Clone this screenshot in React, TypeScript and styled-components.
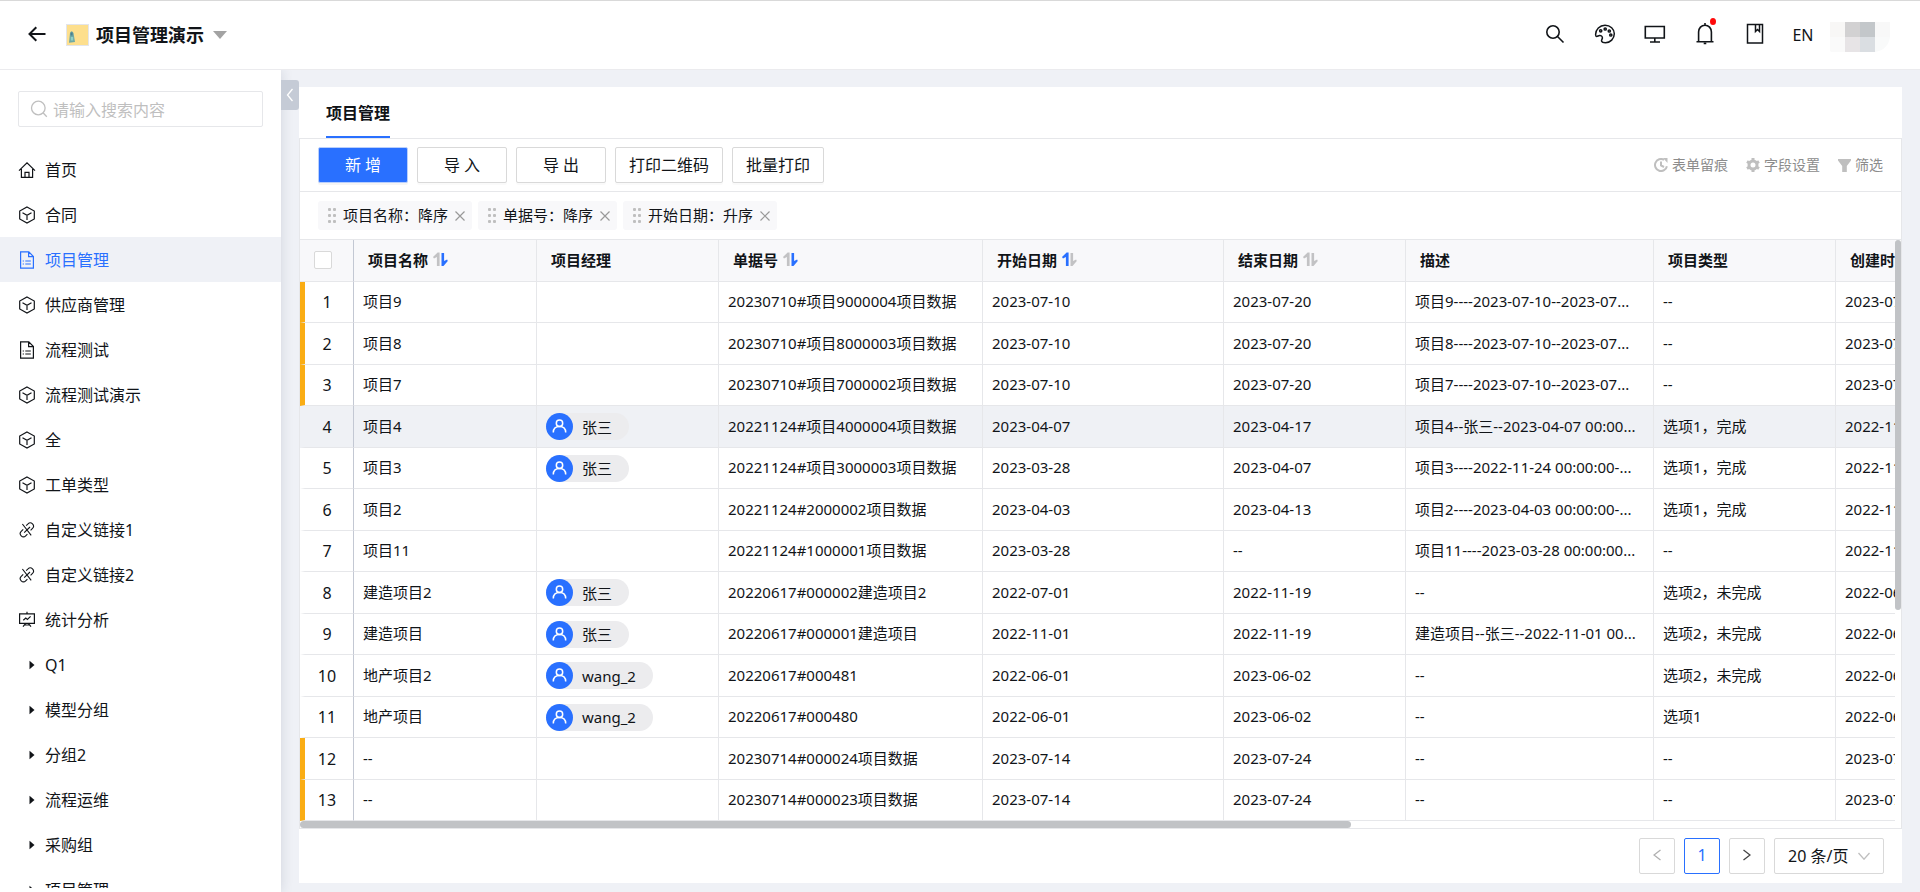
import React from 'react';
import styled, { createGlobalStyle, css } from 'styled-components';

const c = {
  primary: '#2970ff',
  text: '#111418',
  line: '#e6e7ea',
  border: '#d9d9d9',
  canvas: '#eff1f6',
  head: '#f8f8fa',
  muted: '#8c8c8c',
  faint: '#bfbfbf',
  flag: '#faad14',
};

const Global = createGlobalStyle`
  *, *::before, *::after { box-sizing: border-box; }
  body {
    margin: 0;
    color: ${c.text};
    background: ${c.canvas};
    font: 16px/24px "Noto Sans", "Noto Sans CJK SC", sans-serif;
  }
  button, input, select { font: inherit; color: inherit; margin: 0; }
  svg { display: block; flex: none; }
`;

/* ---------- frame ---------- */

const Shell = styled.div`
  display: flex;
  flex-direction: column;
  height: 100vh;
  overflow: hidden;
`;

const TopBar = styled.header`
  display: flex;
  align-items: center;
  justify-content: space-between;
  flex: none;
  height: 70px;
  padding: 0 30px 0 28px;
  background: #fff;
  border-top: 1px solid ${c.border};
  border-bottom: 1px solid #ebebee;
`;

const Brand = styled.div`
  display: flex;
  align-items: center;
`;

const GhostButton = styled.button`
  display: flex;
  align-items: center;
  justify-content: center;
  padding: 0;
  border: 0;
  background: none;
  cursor: pointer;
`;

const BackButton = styled(GhostButton)`
  margin-right: 20px;
  padding-bottom: 2px;
`;

const AppTitle = styled.h1`
  margin: 0 9px 0 7px;
  font-size: 18px;
  line-height: 26px;
  font-weight: 700;
`;

const Actions = styled.div`
  display: flex;
  align-items: center;
  gap: 26px;
`;

const ActionButton = styled(GhostButton)`
  position: relative;
  width: 24px;
  height: 30px;
  padding-bottom: 2px;
`;

const Dot = styled.span`
  position: absolute;
  top: -2px;
  right: 1px;
  width: 6px;
  height: 7px;
  border-radius: 50%;
  background: #ff0a0a;
`;

const LangButton = styled(GhostButton)`
  width: 22px;
  margin: 0 -10px 0 -1px;
`;

const Account = styled.div`
  padding-top: 4px;
`;

const Body = styled.div`
  display: flex;
  flex: 1;
  min-height: 0;
`;

/* ---------- sidebar ---------- */

const Sidebar = styled.aside`
  display: flex;
  flex-direction: column;
  flex: none;
  width: 281px;
  padding: 21px 0 4px;
  background: #fff;
  box-shadow: 0 0 12px rgba(30, 40, 70, 0.14);
  clip-path: inset(0 -18px 0 0);
`;

const SearchBox = styled.label`
  display: flex;
  align-items: center;
  gap: 5px;
  height: 36px;
  flex: none;
  margin: 0 18px 20px;
  padding: 0 11px;
  border: 1px solid ${c.line};
  border-radius: 2px;
`;

const SearchInput = styled.input`
  flex: 1;
  min-width: 0;
  padding: 2px 0 0;
  border: 0;
  outline: 0;
  background: none;
  &::placeholder { color: ${c.faint}; opacity: 1; }
`;

const Nav = styled.nav`
  flex: 1;
  min-height: 0;
  overflow: hidden;
`;

const NavItem = styled.a<{ $active?: boolean }>`
  display: flex;
  align-items: center;
  gap: 9px;
  height: 45px;
  padding-left: 18px;
  text-decoration: none;
  color: ${(p) => (p.$active ? c.primary : c.text)};
  background: ${(p) => (p.$active ? c.canvas : 'transparent')};
`;

const Collapse = styled.button`
  display: flex;
  align-items: center;
  justify-content: center;
  flex: none;
  width: 18px;
  height: 30px;
  margin-top: 10px;
  padding: 0;
  border: 0;
  border-radius: 0 3px 3px 0;
  background: #c5cbd6;
  z-index: 1;
`;

/* ---------- content panel ---------- */

const Panel = styled.main`
  display: flex;
  flex-direction: column;
  flex: 1;
  min-width: 0;
  margin: 17px 18px 9px 0;
  background: #fff;
`;

const Tabs = styled.div`
  display: flex;
  flex: none;
  height: 51px;
  padding: 0 27px;
`;

const Tab = styled.button`
  padding: 2px 0 0;
  border: 0;
  border-bottom: 2px solid ${c.primary};
  background: none;
  font-weight: 600;
`;

const Board = styled.section`
  display: flex;
  flex-direction: column;
  flex: 1;
  min-height: 0;
  border: 1px solid ${c.line};
`;

const Toolbar = styled.div`
  display: flex;
  align-items: center;
  justify-content: space-between;
  flex: none;
  height: 53px;
  padding: 0 18px;
  border-bottom: 1px solid ${c.line};
`;

const ButtonRow = styled.div`
  display: flex;
  gap: 9px;
`;

const Button = styled.button<{ $primary?: boolean }>`
  min-width: 90px;
  height: 36px;
  padding: 0 13px;
  border: 1px solid ${c.border};
  border-radius: 2px;
  background: #fff;
  box-shadow: 0 2px 0 rgba(0, 0, 0, 0.02);
  cursor: pointer;
  ${(p) => p.$primary && css`
    color: #fff;
    background: ${c.primary};
    border-color: #b9cffc;
    box-shadow: 0 2px 0 rgba(0, 0, 0, 0.04);
  `}
`;

const ToolRow = styled.div`
  display: flex;
  gap: 18px;
`;

const Tool = styled(GhostButton)`
  gap: 4px;
  color: ${c.muted};
  font-size: 14px;
  line-height: 20px;
`;

const SortBar = styled.div`
  display: flex;
  align-items: center;
  gap: 6px;
  flex: none;
  height: 48px;
  padding: 0 18px;
  border-bottom: 1px solid ${c.line};
`;

const SortChip = styled.span`
  display: flex;
  align-items: center;
  height: 29px;
  padding: 0 7px 0 10px;
  border-radius: 3px;
  background: #f8f8fa;
  font-size: 15px;
`;

const ChipText = styled.span`
  margin: 0 7px;
  padding-bottom: 2px;
`;

/* ---------- table ---------- */

const Scroller = styled.div`
  display: grid;
  grid-template-columns: minmax(0, 1fr) 6px;
  grid-template-rows: minmax(0, 1fr) 7px;
  flex: 1;
  min-height: 0;
`;

const Viewport = styled.div`
  overflow: hidden;
`;

const Rail = styled.div<{ $horizontal?: boolean }>`
  ${(p) => p.$horizontal && css`grid-column: 1 / -1;`}
`;

const Thumb = styled.div<{ $horizontal?: boolean }>`
  border-radius: 4px;
  background: #c1c3c6;
  ${(p) => (p.$horizontal ? css`width: calc(100% * 1595 / 2430); height: 7px;` : css`width: 6px; height: calc(100% * 582 / 915);`)}
`;

const Grid = styled.table`
  width: 2420px;
  min-width: 100%;
  table-layout: fixed;
  border-collapse: separate;
  border-spacing: 0;
  font-size: 15px;
`;

const Col = styled.col<{ $w?: number }>`
  width: ${(p) => (p.$w ? `${p.$w}px` : 'auto')};
`;

const HeadCell = styled.th<{ $pin?: boolean }>`
  height: 42px;
  padding: 0 14px 2px;
  text-align: left;
  font-weight: 700;
  background: ${c.head};
  border-right: 1px solid ${(p) => (p.$pin ? '#c3c8d3' : c.line)};
  border-bottom: 1px solid ${c.line};
`;

const HeadLabel = styled.span`
  display: flex;
  align-items: center;
  gap: 5px;
`;

const Check = styled.input`
  appearance: none;
  display: block;
  width: 18px;
  height: 18px;
  border: 1px solid ${c.border};
  border-radius: 2px;
  background: #fff;
`;

const Row = styled.tr<{ $hover?: boolean }>`
  height: 41px;
  background: ${(p) => (p.$hover ? '#eff1f5' : '#fff')};
  &:nth-child(even) { height: 42px; }
`;

const Cell = styled.td`
  padding: 0 9px 2px;
  overflow: hidden;
  white-space: nowrap;
  border-right: 1px solid ${c.line};
  border-bottom: 1px solid ${c.line};
`;

const IndexCell = styled(Cell)<{ $flag?: boolean }>`
  padding: 0 4px 0 0;
  text-align: center;
  font-size: 16px;
  border-left: 5px solid ${(p) => (p.$flag ? c.flag : 'transparent')};
  border-right-color: #c3c8d3;
`;

const Person = styled.span`
  display: flex;
  align-items: center;
  gap: 9px;
  width: max-content;
  height: 27px;
  margin-top: 2px;
  padding-right: 17px;
  border-radius: 14px;
  background: #ececee;
`;

/* ---------- footer ---------- */

const Footer = styled.footer`
  display: flex;
  align-items: center;
  justify-content: flex-end;
  gap: 9px;
  flex: none;
  height: 54px;
  padding-right: 18px;
`;

const PageButton = styled.button<{ $current?: boolean }>`
  display: flex;
  align-items: center;
  justify-content: center;
  width: 36px;
  height: 36px;
  padding: 0 0 2px;
  border: 1px solid ${(p) => (p.$current ? c.primary : c.border)};
  border-radius: 2px;
  background: #fff;
  color: ${(p) => (p.$current ? c.primary : c.text)};
`;

const PageSize = styled.span`
  position: relative;
  display: flex;
  align-items: center;
  & > svg {
    position: absolute;
    right: 14px;
    pointer-events: none;
  }
`;

const Select = styled.select`
  appearance: none;
  width: 110px;
  height: 36px;
  padding: 0 13px;
  border: 1px solid ${c.border};
  border-radius: 2px;
  background: #fff;
`;

/* ---------- icons ---------- */

type LineProps = {
  w?: number;
  h?: number;
  color?: string;
  sw?: number;
  children: React.ReactNode;
};

const Line = ({ w = 18, h = 18, color = 'currentColor', sw = 1, children }: LineProps) => (
  <svg width={w} height={h} viewBox={`0 0 ${w} ${h}`} fill="none" stroke={color} strokeWidth={sw} aria-hidden="true">
    {children}
  </svg>
);

const HomeIcon = () => (
  <Line sw={1.2}>
    <path d="M1 9.6 9 1.8l8 7.8M3.4 8v8.3h11.200V8M7 16.300v-5h4v5" />
  </Line>
);

const CubeIcon = () => (
  <Line sw={1.2}>
    <path d="M9 .9l7.300 4.100v8L9 17.100 1.700 13V5zM4.500 6.800 9 9.200l4.500-2.400M9 9.200v4.900" />
  </Line>
);

const FormIcon = () => (
  <Line sw={1.2}>
    <path d="M2.600.9h8.200L15.400 5.500v11.600H2.600zM10.600 1v4.700h4.700M7.300 10h5.500M7.300 13h5.500M4.700 10h1.200M4.700 13h1.200" />
  </Line>
);

const LinkIcon = () => (
  <Line sw={1.1}>
    <path d="M8.200 4.600l1.800-1.700a3.200 3.200 0 0 1 4.500 0 3.200 3.200 0 0 1 0 4.500l-1.900 1.900M9.400 13.100l-1.700 1.700a3.200 3.200 0 0 1-4.500 0 3.200 3.200 0 0 1 0-4.500l2-2M4.400 3l8.800 11.400M12 6l-5.800 5.600" />
  </Line>
);

const ChartIcon = () => (
  <Line sw={1.2}>
    <path d="M9 .8v2M1.600 2.800h14.800v9.600H1.600zM5.300 9.300l2.500-2.200 1.600 1.300 3.200-3M7.500 12.600l-2.500 3M10.500 12.600l2.500 3M6.500 14h5" />
  </Line>
);

const TriangleIcon = () => (
  <svg width="18" height="10" viewBox="0 0 18 10" aria-hidden="true">
    <path d="M11.500.8 16.500 5l-5 4.200z" fill={c.text} />
  </svg>
);

const navIcons = {
  home: HomeIcon,
  cube: CubeIcon,
  form: FormIcon,
  link: LinkIcon,
  chart: ChartIcon,
  group: TriangleIcon,
};

const LensIcon = () => (
  <Line color={c.faint} sw={1.3}>
    <circle cx="8.300" cy="8" r="6.800" />
    <path d="M13 12.800l3.800 4" />
  </Line>
);

const AppLogo = () => (
  <svg width="23" height="22" viewBox="0 0 23 22" aria-hidden="true">
    <rect x=".5" y=".5" width="22" height="21" fill="#fddf8d" stroke="#e3e5ea" />
    <path d="M4 9q1.500-3.500 3.500 0L9 18l-6 .8z" fill="#6fa9a4" />
    <path d="M4.600 8.500h2v3h-2z" fill="#4a7f90" />
    <path d="M4.800 13h2.400v3.500H4.800z" fill="#8fd0c8" />
  </svg>
);

const Mosaic = () => (
  <svg width="60" height="30" viewBox="0 0 60 30" aria-hidden="true">
    <path d="M0 0h15v15H0z" fill="#f8f7f6" />
    <path d="M15 0h15v15H15z" fill="#d2d1d2" />
    <path d="M30 0h15v15H30z" fill="#c3c7ca" />
    <path d="M45 0h15v15H45z" fill="#f8f8f8" />
    <path d="M0 15h15v15H2q-2 0-2-2z" fill="#fafafa" />
    <path d="M15 15h15v15H15z" fill="#e7e4e6" />
    <path d="M30 15h15v15H30z" fill="#dadee2" />
    <path d="M45 15h15q-2 13-15 15z" fill="#f9fafa" />
  </svg>
);

const SortArrows = ({ dir }: { dir: 'asc' | 'desc' | 'none' }) => (
  <svg width="15" height="15" viewBox="0 0 15 15" aria-hidden="true">
    <path d="M4.600.5h2v13.500H3.900V5L1 6.500 0 5z" fill={dir === 'asc' ? c.primary : '#c2c2c4'} />
    <path d="M8.500 1h2.600v8l3-1.500.7 1.600-4.300 5H8.500z" fill={dir === 'desc' ? c.primary : '#c2c2c4'} />
  </svg>
);

const Grip = () => (
  <svg width="8" height="15" viewBox="0 0 8 15" fill={c.faint} aria-hidden="true">
    {[0, 6, 12].map((y) => (
      <React.Fragment key={y}>
        <rect x="0" y={y} width="3" height="3" rx="1" />
        <rect x="5" y={y} width="3" height="3" rx="1" />
      </React.Fragment>
    ))}
  </svg>
);

const AvatarIcon = () => (
  <svg width="27" height="27" viewBox="0 0 27 27" aria-hidden="true">
    <circle cx="13.500" cy="13.500" r="13.500" fill={c.primary} />
    <g fill="none" stroke="#fff" strokeWidth="1.500">
      <circle cx="13.500" cy="10.300" r="3.200" />
      <path d="M7.300 19.500c0-3.800 2.600-6 6.200-6s6.200 2.200 6.200 6" />
    </g>
  </svg>
);

/* ---------- data ---------- */

const navItems: { icon: keyof typeof navIcons; label: string; active?: boolean }[] = [
  { icon: 'home', label: '首页' },
  { icon: 'cube', label: '合同' },
  { icon: 'form', label: '项目管理', active: true },
  { icon: 'cube', label: '供应商管理' },
  { icon: 'form', label: '流程测试' },
  { icon: 'cube', label: '流程测试演示' },
  { icon: 'cube', label: '全' },
  { icon: 'cube', label: '工单类型' },
  { icon: 'link', label: '自定义链接1' },
  { icon: 'link', label: '自定义链接2' },
  { icon: 'chart', label: '统计分析' },
  { icon: 'group', label: 'Q1' },
  { icon: 'group', label: '模型分组' },
  { icon: 'group', label: '分组2' },
  { icon: 'group', label: '流程运维' },
  { icon: 'group', label: '采购组' },
  { icon: 'group', label: '项目管理' },
];

const columns: { label: string; w?: number; sort?: 'asc' | 'desc' | 'none' }[] = [
  { label: '项目名称', w: 183, sort: 'desc' },
  { label: '项目经理', w: 182 },
  { label: '单据号', w: 264, sort: 'desc' },
  { label: '开始日期', w: 241, sort: 'asc' },
  { label: '结束日期', w: 182, sort: 'none' },
  { label: '描述', w: 248 },
  { label: '项目类型', w: 182 },
  { label: '创建时间' },
];

type ProjectRow = [string, string, string, string, string, string, string, string];

const rows: ProjectRow[] = [
  ['项目9', '', '20230710#项目9000004项目数据', '2023-07-10', '2023-07-20', '项目9----2023-07-10--2023-07...', '--', '2023-07-10'],
  ['项目8', '', '20230710#项目8000003项目数据', '2023-07-10', '2023-07-20', '项目8----2023-07-10--2023-07...', '--', '2023-07-10'],
  ['项目7', '', '20230710#项目7000002项目数据', '2023-07-10', '2023-07-20', '项目7----2023-07-10--2023-07...', '--', '2023-07-10'],
  ['项目4', '张三', '20221124#项目4000004项目数据', '2023-04-07', '2023-04-17', '项目4--张三--2023-04-07 00:00...', '选项1，完成', '2022-11-24'],
  ['项目3', '张三', '20221124#项目3000003项目数据', '2023-03-28', '2023-04-07', '项目3----2022-11-24 00:00:00-...', '选项1，完成', '2022-11-24'],
  ['项目2', '', '20221124#2000002项目数据', '2023-04-03', '2023-04-13', '项目2----2023-04-03 00:00:00-...', '选项1，完成', '2022-11-24'],
  ['项目11', '', '20221124#1000001项目数据', '2023-03-28', '--', '项目11----2023-03-28 00:00:00...', '--', '2022-11-24'],
  ['建造项目2', '张三', '20220617#000002建造项目2', '2022-07-01', '2022-11-19', '--', '选项2，未完成', '2022-06-17'],
  ['建造项目', '张三', '20220617#000001建造项目', '2022-11-01', '2022-11-19', '建造项目--张三--2022-11-01 00...', '选项2，未完成', '2022-06-17'],
  ['地产项目2', 'wang_2', '20220617#000481', '2022-06-01', '2023-06-02', '--', '选项2，未完成', '2022-06-17'],
  ['地产项目', 'wang_2', '20220617#000480', '2022-06-01', '2023-06-02', '--', '选项1', '2022-06-17'],
  ['--', '', '20230714#000024项目数据', '2023-07-14', '2023-07-24', '--', '--', '2023-07-14'],
  ['--', '', '20230714#000023项目数据', '2023-07-14', '2023-07-24', '--', '--', '2023-07-14'],
];

const flagged = [1, 2, 3, 12, 13];
const hovered = 4;
const sortRules = ['项目名称：降序', '单据号：降序', '开始日期：升序'];

/* ---------- sections ---------- */

const Header = () => (
  <TopBar>
    <Brand>
      <BackButton aria-label="返回">
        <Line w={18} h={16} sw={2}>
          <path d="M17.500 8H1.500M8.300 1.200 1.500 8l6.800 6.800" />
        </Line>
      </BackButton>
      <AppLogo />
      <AppTitle>项目管理演示</AppTitle>
      <GhostButton aria-label="切换应用">
        <svg width="14" height="8" viewBox="0 0 14 8" aria-hidden="true">
          <path d="M0 0h14L7 8z" fill="#a3a3a3" />
        </svg>
      </GhostButton>
    </Brand>
    <Actions>
      <ActionButton aria-label="搜索">
        <Line w={20} h={20} sw={1.6}>
          <circle cx="8" cy="8" r="6.200" />
          <path d="M12.500 12.500l6 6" />
        </Line>
      </ActionButton>
      <ActionButton aria-label="主题">
        <Line w={22} h={20} sw={1.5}>
          <path d="M11 1.200c5.400 0 9.300 3.800 9.300 8.600 0 5-4 8.900-8.800 8.900-1.800 0-3.500-.4-3.900-1.400-.5-1.200.9-2.200.8-3.600-.1-1.500-1.300-2.300-2.800-2.200-1.300.1-2 1-3 .9-.9-.1-1-1.200-1-2C1.700 5.400 5.600 1.200 11 1.200z" />
          <circle cx="6.700" cy="6.800" r="1.100" />
          <circle cx="11.200" cy="5" r="1.100" />
          <circle cx="15.300" cy="7" r="1.100" />
          <circle cx="16.800" cy="11" r="1.100" />
        </Line>
      </ActionButton>
      <ActionButton aria-label="工作台">
        <Line w={22} h={20} sw={1.6}>
          <path d="M1.300 2.500h19v11.500h-19zM10.800 14v4M6 18h10" />
        </Line>
      </ActionButton>
      <ActionButton aria-label="通知">
        <Line w={18} h={24} sw={1.6}>
          <path d="M.5 19.700h17M2.600 19.700V10c0-4 2.800-6.800 6.400-6.800s6.400 2.800 6.400 6.800v9.700M9 1v2M7.700 21.500h2.600" />
        </Line>
        <Dot />
      </ActionButton>
      <ActionButton aria-label="文档">
        <Line w={18} h={22} sw={1.5}>
          <path d="M1.500 1.500h15v18.500h-15zM9.500 1.500v7l2-2 2 2v-7" />
        </Line>
      </ActionButton>
      <LangButton>EN</LangButton>
      <Account>
        <Mosaic />
      </Account>
    </Actions>
  </TopBar>
);

const SideMenu = () => (
  <Sidebar>
    <SearchBox>
      <LensIcon />
      <SearchInput type="text" placeholder="请输入搜索内容" aria-label="搜索菜单" />
    </SearchBox>
    <Nav>
      {navItems.map((item, i) => {
        const Icon = navIcons[item.icon];
        return (
          <NavItem key={i} href="#" $active={item.active}>
            <Icon />
            {item.label}
          </NavItem>
        );
      })}
    </Nav>
  </Sidebar>
);

const DataTable = () => (
  <Grid>
    <colgroup>
      <Col $w={54} />
      {columns.map((col) => (
        <Col key={col.label} $w={col.w} />
      ))}
    </colgroup>
    <thead>
      <tr>
        <HeadCell $pin>
          <Check type="checkbox" aria-label="全选" />
        </HeadCell>
        {columns.map((col) => (
          <HeadCell key={col.label}>
            <HeadLabel>
              {col.label}
              {col.sort && <SortArrows dir={col.sort} />}
            </HeadLabel>
          </HeadCell>
        ))}
      </tr>
    </thead>
    <tbody>
      {rows.map((cells, r) => (
        <Row key={r} $hover={r + 1 === hovered}>
          <IndexCell $flag={flagged.includes(r + 1)}>{r + 1}</IndexCell>
          {cells.map((value, i) => (
            <Cell key={i}>
              {i === 1 && value ? (
                <Person>
                  <AvatarIcon />
                  {value}
                </Person>
              ) : (
                value
              )}
            </Cell>
          ))}
        </Row>
      ))}
    </tbody>
  </Grid>
);

const Tools = () => (
  <ToolRow>
    <Tool>
      <Line w={14} h={14} color={c.faint} sw={2}>
        <path d="M10 1.800A6 6 0 1 0 12.900 8.200M7 3.500v4l3 1.500" />
        <path d="M9 0h4.500v5z" fill={c.faint} stroke="none" />
      </Line>
      表单留痕
    </Tool>
    <Tool>
      <Line w={14} h={14} color={c.faint} sw={3}>
        <circle cx="7" cy="7" r="4" />
        <path d="M7 0v2.500M7 11.500V14M1 3.500l2 1.200M11 9.300l2 1.200M1 10.500l2-1.200M11 4.700l2-1.200" />
      </Line>
      字段设置
    </Tool>
    <Tool>
      <svg width="13" height="13" viewBox="0 0 13 13" aria-hidden="true">
        <path d="M0 0h13v1.500L8.800 7v6H4.200V7L0 1.500z" fill={c.faint} />
      </svg>
      筛选
    </Tool>
  </ToolRow>
);

export default function App() {
  return (
    <>
      <Global />
      <Shell>
        <Header />
        <Body>
          <SideMenu />
          <Collapse aria-label="收起菜单">
            <Line w={8} h={14} color="#fff" sw={1.3}>
              <path d="M6.500 1 1.500 7l5 6" />
            </Line>
          </Collapse>
          <Panel>
            <Tabs>
              <Tab>项目管理</Tab>
            </Tabs>
            <Board>
              <Toolbar>
                <ButtonRow>
                  <Button $primary>新 增</Button>
                  <Button>导 入</Button>
                  <Button>导 出</Button>
                  <Button>打印二维码</Button>
                  <Button>批量打印</Button>
                </ButtonRow>
                <Tools />
              </Toolbar>
              <SortBar>
                {sortRules.map((rule) => (
                  <SortChip key={rule}>
                    <Grip />
                    <ChipText>{rule}</ChipText>
                    <GhostButton aria-label="移除排序">
                      <Line w={10} h={10} color="#999" sw={1.2}>
                        <path d="M.5.5l9 9M9.500.5l-9 9" />
                      </Line>
                    </GhostButton>
                  </SortChip>
                ))}
              </SortBar>
              <Scroller>
                <Viewport>
                  <DataTable />
                </Viewport>
                <Rail>
                  <Thumb />
                </Rail>
                <Rail $horizontal>
                  <Thumb $horizontal />
                </Rail>
              </Scroller>
            </Board>
            <Footer>
              <PageButton aria-label="上一页">
                <Line w={8} h={12} color="#b0b0b0" sw={1.3}>
                  <path d="M7.500 1 1 6l6.500 5" />
                </Line>
              </PageButton>
              <PageButton $current>1</PageButton>
              <PageButton aria-label="下一页">
                <Line w={8} h={12} color="#444" sw={1.3}>
                  <path d="M.5 1 7 6 .5 11" />
                </Line>
              </PageButton>
              <PageSize>
                <Select aria-label="每页条数" defaultValue="20">
                  <option value="20">20 条/页</option>
                  <option value="50">50 条/页</option>
                </Select>
                <Line w={12} h={8} color={c.faint} sw={1.3}>
                  <path d="M.5 1 6 7.200 11.500 1" />
                </Line>
              </PageSize>
            </Footer>
          </Panel>
        </Body>
      </Shell>
    </>
  );
}
